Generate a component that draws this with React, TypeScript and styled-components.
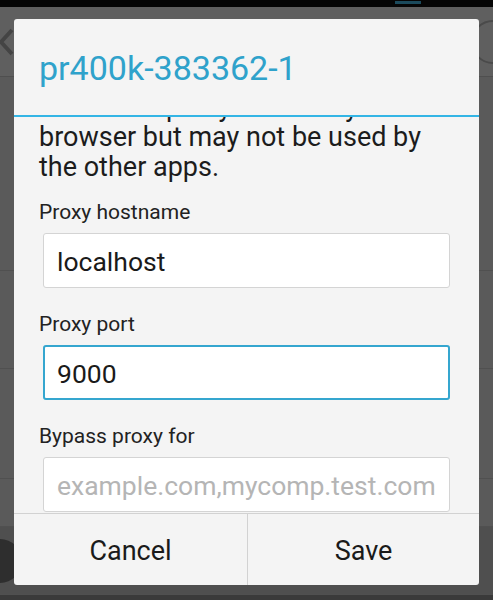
import React from "react";
import styled, { createGlobalStyle } from "styled-components";

const GlobalStyle = createGlobalStyle`
  html, body { margin: 0; padding: 0; background: #5a5a5a; }
  body { font-family: Roboto, "Noto Sans", "DejaVu Sans", sans-serif; }
  * { box-sizing: border-box; }
`;

const Screen = styled.div`
  position: relative;
  width: 493px;
  height: 600px;
  overflow: hidden;
  background: #5a5a5a;
`;

const Backdrop = styled.div`
  display: flex;
  flex-direction: column;
  height: 100%;
`;

const StatusBar = styled.div`
  height: 7px;
  background: #050505;
  display: flex;
  justify-content: flex-end;
  padding-right: 72px;
`;

const StatusGlyph = styled.div`
  width: 26px;
  height: 3px;
  margin-top: 1px;
  background: #1b4a5c;
`;

const ActionBar = styled.div`
  height: 70px;
  background: #5f5f5f;
  border-bottom: 1px solid #4f4f4f;
  display: flex;
  align-items: center;
  justify-content: space-between;
`;

const BackChevron = styled.svg`
  width: 16px;
  height: 30px;
  margin-left: -2px;
`;

const GhostCircle = styled.div`
  width: 44px;
  height: 44px;
  border-radius: 50%;
  border: 2px solid #4a4a4a;
  margin-right: -22px;
`;

const BgRow = styled.div<{ $h: number; $dark?: boolean }>`
  height: ${(p) => p.$h}px;
  border-bottom: 1px solid #505050;
  background: ${(p) => (p.$dark ? "#4f4f4f" : "#5a5a5a")};
  display: flex;
  align-items: center;
`;

const BgAvatar = styled.div`
  width: 44px;
  height: 44px;
  border-radius: 50%;
  background: #2e2e2e;
  margin-left: -22px;
`;

const BottomEdge = styled.div`
  flex: 1;
  background: #3a3a3a;
`;

const Dialog = styled.div`
  position: absolute;
  left: 14px;
  top: 19px;
  width: 465px;
  height: 566px;
  background: #f4f4f4;
  border-radius: 3px;
  display: flex;
  flex-direction: column;
  overflow: hidden;
`;

const TitleBar = styled.div`
  height: 96px;
  display: flex;
  align-items: center;
  padding: 2px 25px 0;
`;

const Title = styled.h1`
  margin: 0;
  font-weight: 400;
  font-size: 34px;
  color: #2fa2cb;
  letter-spacing: 0;
`;

const TitleDivider = styled.div`
  height: 2px;
  background: #33b5e5;
  position: relative;
  z-index: 1;
`;

const ScrollArea = styled.div`
  flex: 1;
  overflow: hidden;
  padding: 0 25px;
`;

const ScrollContent = styled.div<{ $offset: number }>`
  margin-top: ${(p) => -p.$offset}px;
  display: flex;
  flex-direction: column;
`;

const Message = styled.p`
  margin: 0 0 18px;
  font-size: 27px;
  line-height: 30px;
  color: #1c1c1c;
`;

const Field = styled.div`
  display: flex;
  flex-direction: column;
  margin-bottom: 24px;
`;

const Label = styled.label`
  font-size: 21px;
  line-height: 24px;
  color: #222;
  margin-bottom: 9px;
`;

const Input = styled.input<{ $focused?: boolean }>`
  margin: 0 4px;
  height: 55px;
  border-radius: 3px;
  background: #fff;
  border: ${(p) => (p.$focused ? "2px solid #35a6cf" : "1px solid #d4d4d4")};
  padding: 2px ${(p) => (p.$focused ? 12 : 13)}px 0;
  font-family: Roboto, "Noto Sans", sans-serif;
  font-size: 26.5px;
  color: #1a1a1a;
  outline: none;
  &::placeholder {
    color: #b5b5b5;
  }
`;

const ButtonBar = styled.div`
  display: grid;
  grid-template-columns: 233px 1fr;
  height: 72px;
  border-top: 1px solid #d2d2d2;
`;

const DialogButton = styled.button<{ $divider?: boolean }>`
  background: transparent;
  border: none;
  border-left: ${(p) => (p.$divider ? "1px solid #d2d2d2" : "none")};
  font-family: Roboto, "Noto Sans", sans-serif;
  font-size: 27px;
  color: #1a1a1a;
  padding: 3px 0 0;
`;

export default function App() {
  return (
    <>
      <GlobalStyle />
      <Screen>
        <Backdrop>
          <StatusBar>
            <StatusGlyph />
          </StatusBar>
          <ActionBar>
            <BackChevron viewBox="0 0 16 30">
              <path d="M14 3 L3 15 L14 27" stroke="#444" strokeWidth="4" fill="none" />
            </BackChevron>
            <GhostCircle />
          </ActionBar>
          <BgRow $h={194} />
          <BgRow $h={98} />
          <BgRow $h={110} />
          <BgRow $h={48} />
          <BgRow $h={68} $dark>
            <BgAvatar />
          </BgRow>
          <BottomEdge />
        </Backdrop>

        <Dialog>
          <TitleBar>
            <Title>pr400k-383362-1</Title>
          </TitleBar>
          <TitleDivider />
          <ScrollArea>
            <ScrollContent $offset={25}>
              <Message>
                The HTTP proxy is used by the browser but may not be used by the other apps.
              </Message>
              <Field>
                <Label>Proxy hostname</Label>
                <Input defaultValue="localhost" />
              </Field>
              <Field>
                <Label>Proxy port</Label>
                <Input $focused defaultValue="9000" />
              </Field>
              <Field>
                <Label>Bypass proxy for</Label>
                <Input placeholder="example.com,mycomp.test.com" />
              </Field>
            </ScrollContent>
          </ScrollArea>
          <ButtonBar>
            <DialogButton>Cancel</DialogButton>
            <DialogButton $divider>Save</DialogButton>
          </ButtonBar>
        </Dialog>
      </Screen>
    </>
  );
}
